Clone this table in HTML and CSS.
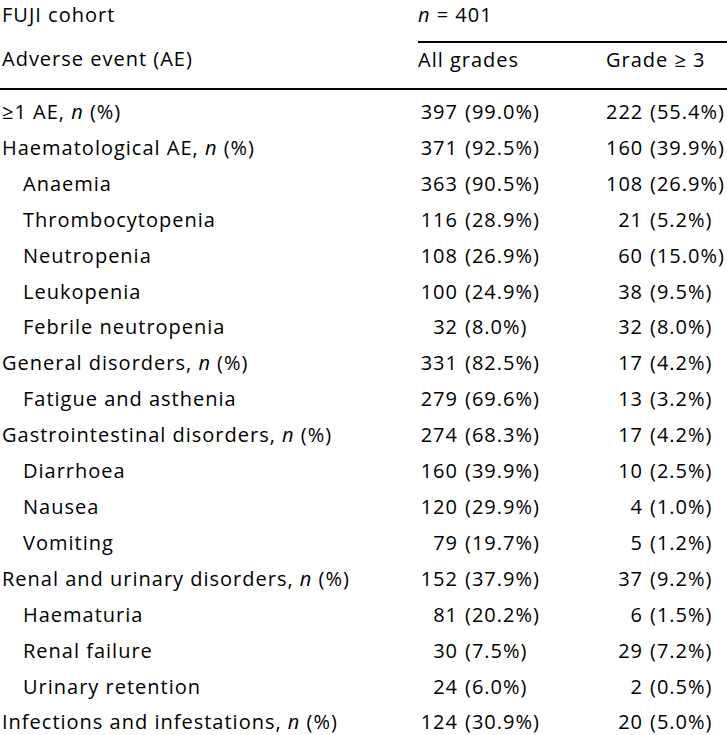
FILE: index.html
```html
<!DOCTYPE html>
<html lang="en">
<head>
<meta charset="utf-8">
<title>FUJI cohort adverse events</title>
<link rel="stylesheet" href="styles.css">
</head>
<body>
<table class="ae-table">
  <colgroup>
    <col class="c-label">
    <col class="c-all">
    <col class="c-g3">
  </colgroup>
  <thead>
    <tr class="row-cohort">
      <th class="label">FUJI cohort</th>
      <th class="span-head" colspan="2"><i>n</i> = 401</th>
    </tr>
    <tr class="row-head">
      <th class="label">Adverse event (AE)</th>
      <th class="val">All grades</th>
      <th class="val">Grade ≥ 3</th>
    </tr>
  </thead>
  <tbody>
    <tr class="first"><td class="label">≥1 AE, <i>n</i> (%)</td><td class="val all"><span class="num">397</span><span class="pct">(99.0%)</span></td><td class="val g3"><span class="num">222</span><span class="pct">(55.4%)</span></td></tr>
    <tr><td class="label">Haematological AE, <i>n</i> (%)</td><td class="val all"><span class="num">371</span><span class="pct">(92.5%)</span></td><td class="val g3"><span class="num">160</span><span class="pct">(39.9%)</span></td></tr>
    <tr><td class="label sub">Anaemia</td><td class="val all"><span class="num">363</span><span class="pct">(90.5%)</span></td><td class="val g3"><span class="num">108</span><span class="pct">(26.9%)</span></td></tr>
    <tr><td class="label sub">Thrombocytopenia</td><td class="val all"><span class="num">116</span><span class="pct">(28.9%)</span></td><td class="val g3"><span class="num">21</span><span class="pct">(5.2%)</span></td></tr>
    <tr><td class="label sub">Neutropenia</td><td class="val all"><span class="num">108</span><span class="pct">(26.9%)</span></td><td class="val g3"><span class="num">60</span><span class="pct">(15.0%)</span></td></tr>
    <tr><td class="label sub">Leukopenia</td><td class="val all"><span class="num">100</span><span class="pct">(24.9%)</span></td><td class="val g3"><span class="num">38</span><span class="pct">(9.5%)</span></td></tr>
    <tr><td class="label sub">Febrile neutropenia</td><td class="val all"><span class="num">32</span><span class="pct">(8.0%)</span></td><td class="val g3"><span class="num">32</span><span class="pct">(8.0%)</span></td></tr>
    <tr><td class="label">General disorders, <i>n</i> (%)</td><td class="val all"><span class="num">331</span><span class="pct">(82.5%)</span></td><td class="val g3"><span class="num">17</span><span class="pct">(4.2%)</span></td></tr>
    <tr><td class="label sub">Fatigue and asthenia</td><td class="val all"><span class="num">279</span><span class="pct">(69.6%)</span></td><td class="val g3"><span class="num">13</span><span class="pct">(3.2%)</span></td></tr>
    <tr><td class="label">Gastrointestinal disorders, <i>n</i> (%)</td><td class="val all"><span class="num">274</span><span class="pct">(68.3%)</span></td><td class="val g3"><span class="num">17</span><span class="pct">(4.2%)</span></td></tr>
    <tr><td class="label sub">Diarrhoea</td><td class="val all"><span class="num">160</span><span class="pct">(39.9%)</span></td><td class="val g3"><span class="num">10</span><span class="pct">(2.5%)</span></td></tr>
    <tr><td class="label sub">Nausea</td><td class="val all"><span class="num">120</span><span class="pct">(29.9%)</span></td><td class="val g3"><span class="num">4</span><span class="pct">(1.0%)</span></td></tr>
    <tr><td class="label sub">Vomiting</td><td class="val all"><span class="num">79</span><span class="pct">(19.7%)</span></td><td class="val g3"><span class="num">5</span><span class="pct">(1.2%)</span></td></tr>
    <tr><td class="label">Renal and urinary disorders, <i>n</i> (%)</td><td class="val all"><span class="num">152</span><span class="pct">(37.9%)</span></td><td class="val g3"><span class="num">37</span><span class="pct">(9.2%)</span></td></tr>
    <tr><td class="label sub">Haematuria</td><td class="val all"><span class="num">81</span><span class="pct">(20.2%)</span></td><td class="val g3"><span class="num">6</span><span class="pct">(1.5%)</span></td></tr>
    <tr><td class="label sub">Renal failure</td><td class="val all"><span class="num">30</span><span class="pct">(7.5%)</span></td><td class="val g3"><span class="num">29</span><span class="pct">(7.2%)</span></td></tr>
    <tr><td class="label sub">Urinary retention</td><td class="val all"><span class="num">24</span><span class="pct">(6.0%)</span></td><td class="val g3"><span class="num">2</span><span class="pct">(0.5%)</span></td></tr>
    <tr><td class="label">Infections and infestations, <i>n</i> (%)</td><td class="val all"><span class="num">124</span><span class="pct">(30.9%)</span></td><td class="val g3"><span class="num">20</span><span class="pct">(5.0%)</span></td></tr>
  </tbody>
</table>
</body>
</html>
```

FILE: styles.css
```css
html, body {
  margin: 0;
  padding: 0;
  background: #ffffff;
}

body {
  font-family: "Open Sans", "Noto Sans", sans-serif;
  font-size: 20px;
  letter-spacing: 1px;
  color: #000000;
  overflow: hidden;
}

.ae-table {
  width: 727px;
  table-layout: fixed;
  border-collapse: collapse;
  border-spacing: 0;
}

.c-label { width: 418px; }
.c-all { width: 188px; }
.c-g3 { width: 121px; }

.ae-table th,
.ae-table td {
  padding: 0;
  font-weight: 400;
  text-align: left;
  white-space: nowrap;
  vertical-align: top;
}

.ae-table i {
  font-style: italic;
}

.label {
  padding-left: 2px !important;
}

.label.sub {
  padding-left: 23px !important;
}

.row-cohort th {
  line-height: 30px;
  height: 41px;
  box-sizing: border-box;
  padding-bottom: 11px;
}

.row-cohort .span-head {
  border-bottom: 2px solid #000;
}

.row-head th {
  line-height: 30px;
  padding-top: 2px;
  padding-bottom: 13px;
  border-bottom: 2px solid #000;
}

.ae-table tbody td {
  line-height: 35.9px;
}

.ae-table tbody tr.first td {
  padding-top: 4px;
}

.num {
  display: inline-block;
  text-align: right;
}

.all .num { width: 40px; }
.g3 .num { width: 37px; }

.pct {
  padding-left: 7px;
}
```
